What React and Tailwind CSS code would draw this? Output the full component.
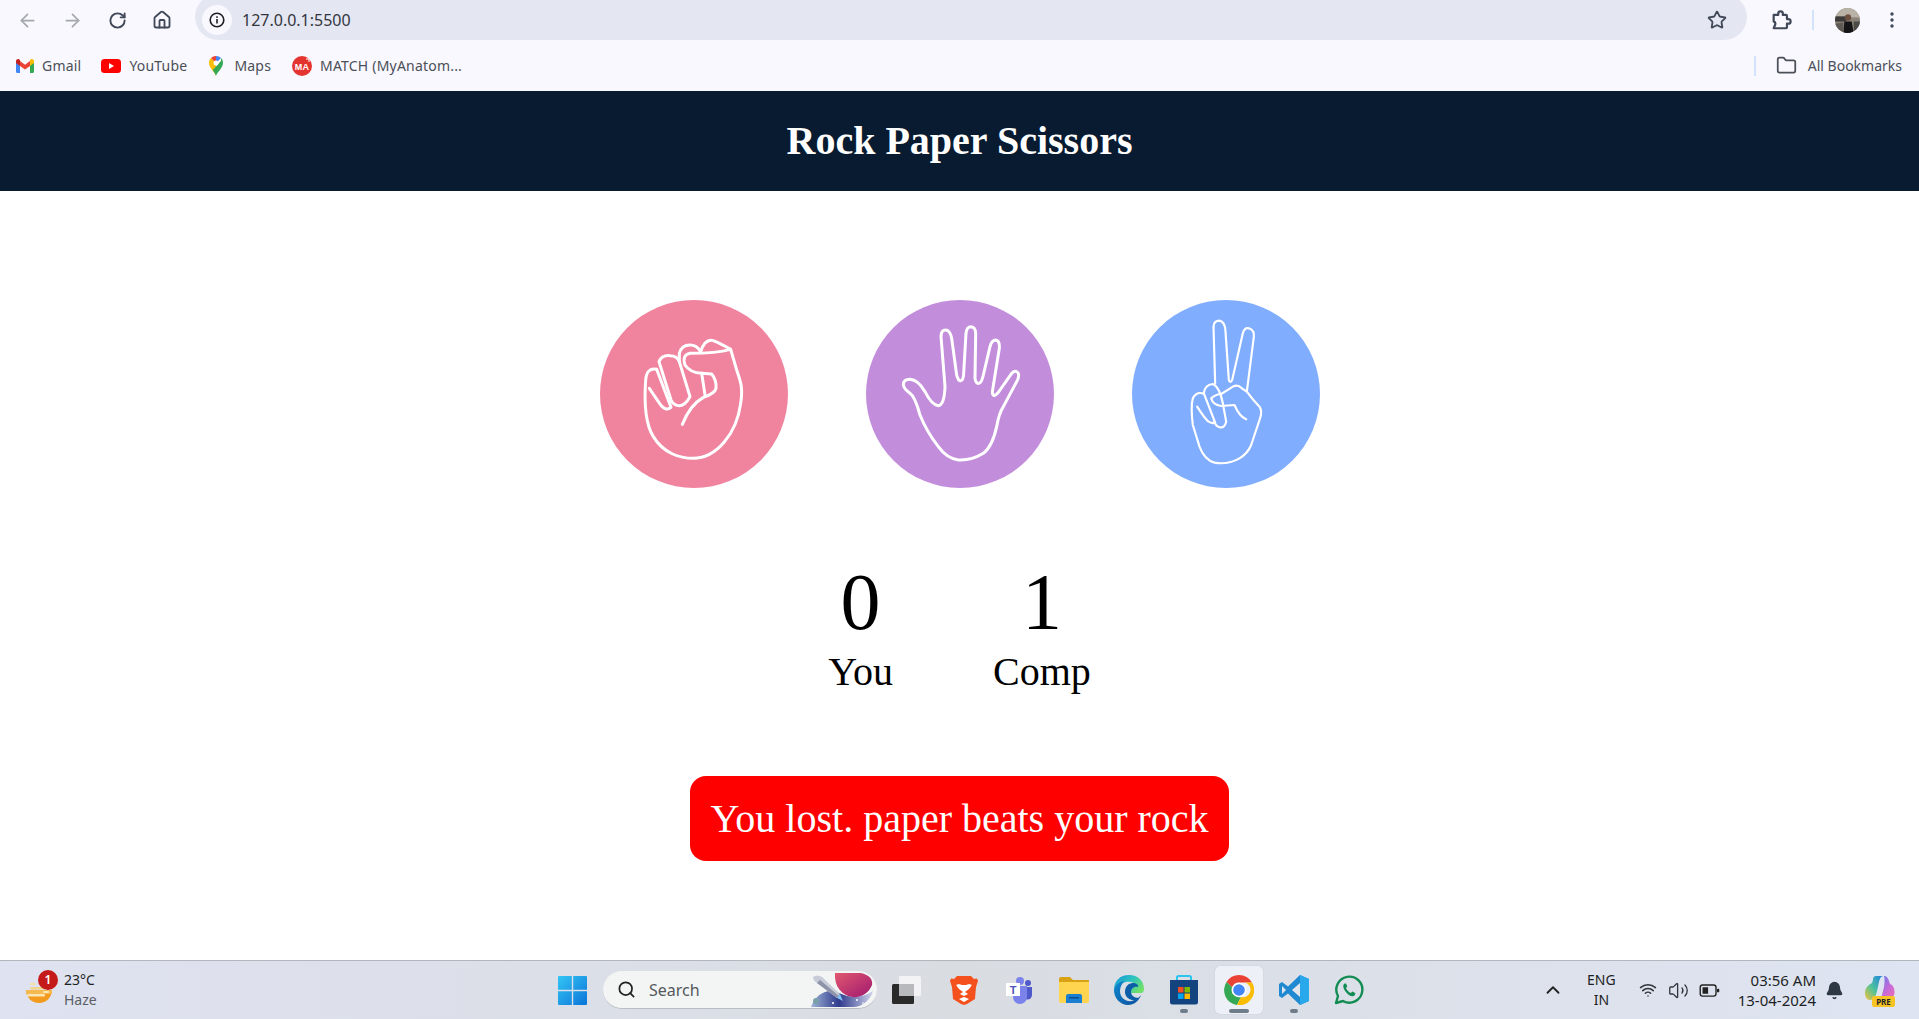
import React from "react";
import { ArrowLeft, ArrowRight, RotateCw, House, Star, Folder, Search, ChevronUp, Wifi, Volume2, Bell } from "lucide-react";

const Fist = () => (
  <svg viewBox="30 30 564 564" className="w-full h-full" fill="none" stroke="#fff" strokeWidth="9" strokeLinecap="round" strokeLinejoin="round">
    <path d="M200 238Q170 232 167 270C162 340 165 400 190 440C220 490 270 505 310 505C380 505 440 430 452 340C460 290 450 270 440 240L422 178" />
    <path d="M178 295L212 345Q228 365 243 352L200 238" />
    <path d="M207 215Q215 195 240 197Q262 197 268 215L300 320Q280 355 258 345Q248 342 243 330L207 215" />
    <path d="M268 215V190Q275 165 300 165Q320 165 332 185Q345 145 370 152Q390 160 422 178Q380 190 300 190Q275 195 285 225Q300 248 335 250L365 252Q380 270 378 295Q375 310 340 322Q300 345 277 403" />
    <path d="M335 250L345 315" />
  </svg>
);

const Paper = () => (
  <svg viewBox="33 30 564 564" className="w-full h-full" fill="none" stroke="#fff" strokeWidth="9" strokeLinecap="round" strokeLinejoin="round">
    <path d="M145 285Q145 268 165 268Q190 270 210 305Q230 345 250 347Q268 345 270 290L258 140Q258 120 272 120Q285 120 290 145L305 255Q310 275 318 272Q325 270 326 250L333 130Q335 110 348 110Q362 112 362 130L360 265Q362 282 372 280Q380 278 385 255L405 170Q410 150 422 150Q435 152 433 175L412 305Q412 318 420 316Q428 312 435 300L470 250Q482 238 490 250Q493 262 485 275L445 350Q432 370 425 410Q412 470 385 490Q350 512 310 510Q275 505 250 470Q215 425 195 375Q180 320 165 310Q148 298 145 285Z" />
  </svg>
);

const Scissors = () => (
  <svg viewBox="24 30 561 564" className="w-full h-full" fill="none" stroke="#fff" strokeWidth="6.500" strokeLinecap="round" strokeLinejoin="round">
    <path d="M272 280L267 110Q268 92 285 92Q302 95 303 125L313 270Q316 282 323 270L355 130Q360 112 373 115Q390 120 388 140L367 305Q385 330 405 350Q415 365 405 390L380 465Q370 490 345 505Q310 525 270 518Q240 510 225 470L205 405Q198 350 205 325Q215 305 235 310" />
    <path d="M218 350Q240 385 252 395Q265 402 272 398L238 310Q240 285 265 282Q285 290 295 340L305 395Q300 415 285 412Q272 408 268 390" />
    <path d="M260 325Q275 312 290 312Q310 300 325 290Q340 282 352 295L367 305M260 325Q265 345 290 348L330 345Q345 380 365 388" />
  </svg>
);

const Gmail = () => (
  <svg viewBox="0 0 18 14" className="w-[18px] h-[14px]">
    <path d="M0 2v10.500A1.500 1.500 0 0 0 1.500 14H4V6z" fill="#4285f4" />
    <path d="M18 2v10.500a1.500 1.500 0 0 1-1.500 1.500H14V6z" fill="#34a853" />
    <path d="M4 7V2l5 3.800L14 2v5L9 10.600z" fill="#ea4335" />
    <path d="M0 2.200C0 .5 2 -.6 3.300.4L4 1v6L0 4z" fill="#c5221f" />
    <path d="M18 2.200C18 .5 16 -.6 14.700.4L14 1v6l4-3z" fill="#fbbc04" />
  </svg>
);

const Youtube = () => (
  <svg viewBox="0 0 20 14" className="w-5 h-[14px]">
    <rect width="20" height="14" rx="3.500" fill="#f00" />
    <path d="M8 4l5 3-5 3z" fill="#fff" />
  </svg>
);

const Maps = () => (
  <svg viewBox="0 0 14 20" className="w-[14px] h-5">
    <path d="M7 20C6 16 0 12 0 7c0-2 .8-3.700 2-5l5 5z" fill="#fbbc04" />
    <path d="M2 2A7 7 0 0 1 7 0v7z" fill="#ea4335" />
    <path d="M7 0a7 7 0 0 1 5 2L7 7z" fill="#4285f4" />
    <path d="M12 2c1.300 1.300 2 3 2 5 0 5-6 9-7 13-.5-2-2-4-3.300-6L12 5z" fill="#34a853" />
    <circle cx="7" cy="7" r="2.500" fill="#fff" />
  </svg>
);

const MatchLogo = () => (
  <svg viewBox="0 0 20 20" className="w-5 h-5">
    <circle cx="10" cy="10" r="10" fill="#e3342f" />
    <text x="10" y="13.500" textAnchor="middle" fontSize="9" fontWeight="700" fill="#fff" fontFamily="Liberation Sans, sans-serif">MA</text>
    <path d="M14 3h3v3" stroke="#fff" strokeWidth="1" fill="none" />
  </svg>
);

const Bookmark = ({ icon, label, className }) => (
  <div className={`flex items-center gap-[8px] ${className}`}>
    {icon}
    <span>{label}</span>
  </div>
);

const PuzzleIcon = () => (
  <svg viewBox="0 0 24 24" className="w-[22px] h-[22px]" fill="none" stroke="#414858" strokeWidth="2.400" strokeLinejoin="round">
    <path d="M4 6.500h5V5a2.500 2.500 0 0 1 5 0v1.500h3.500a1 1 0 0 1 1 1V11H20a2.500 2.500 0 0 1 0 5h-1.500v4a1 1 0 0 1-1 1H4l1.500-3.500c.8-2-.3-3.500-1.500-4z" />
  </svg>
);

const Avatar = () => (
  <svg viewBox="0 0 24 24" className="w-[25px] h-[25px] rounded-full">
    <rect width="24" height="24" fill="#8a8378" />
    <rect width="24" height="9" fill="#b9b2a6" />
    <rect y="8" width="11" height="5" fill="#3d3a3a" />
    <path d="M8 24l1-11h7l2 11z" fill="#141416" />
    <circle cx="12.500" cy="9" r="3" fill="#6d4f3f" />
    <path d="M18 24V13h6v11z" fill="#4c4a46" />
    <path d="M0 24V15l8-1v10z" fill="#5f5a55" />
  </svg>
);

const ChromeTop = () => (
  <div className="h-[91px] shrink-0 bg-[#f9f8fe] flex flex-col font-['Noto_Sans',sans-serif] overflow-hidden">
    <div className="h-[40px] flex items-start shrink-0">
      <div className="flex items-center h-[40px] pl-[17px] w-[190px] shrink-0">
        <ArrowLeft size={21} className="text-[#a4a7ad]" />
        <ArrowRight size={21} className="text-[#a4a7ad] ml-[24px]" />
        <RotateCw size={19} strokeWidth={2.400} className="text-[#414858] ml-[25px]" />
        <House size={20} strokeWidth={2.200} className="text-[#414858] ml-[25px]" />
      </div>
      <div className="ml-[5px] -mt-[6px] h-[46px] w-[1552px] shrink-0 bg-[#e4e7f2] rounded-full flex items-center pl-[7px] pr-[20px]">
        <div className="mt-[6px] w-[30px] h-[30px] bg-[#f9f8fe] rounded-full flex items-center justify-center">
          <svg viewBox="0 0 16 16" className="w-4 h-4">
            <circle cx="8" cy="8" r="6.800" fill="none" stroke="#1f2024" strokeWidth="1.600" />
            <rect x="7.200" y="7" width="1.600" height="4.500" fill="#1f2024" />
            <rect x="7.200" y="4.300" width="1.600" height="1.600" fill="#1f2024" />
          </svg>
        </div>
        <span className="mt-[5px] ml-[10px] text-[16px] text-[#33363d]">127.0.0.1:5500</span>
        <Star size={20} strokeWidth={2.200} className="mt-[6px] ml-auto text-[#414858]" />
      </div>
      <div className="flex items-center h-[40px] flex-1 min-w-0 pl-[23px]">
        <PuzzleIcon />
        <div className="ml-[20px] w-[2px] h-[20px] bg-[#d3e3fd]" />
        <div className="ml-[21px]"><Avatar /></div>
        <svg viewBox="0 0 4 16" className="ml-[30px] w-1 h-4 shrink-0" fill="#414858">
          <circle cx="2" cy="2" r="1.700" /><circle cx="2" cy="8" r="1.700" /><circle cx="2" cy="14" r="1.700" />
        </svg>
      </div>
    </div>
    <div className="flex-1 flex items-center text-[14px] tracking-[0.2px] text-[#4b4f58]">
      <Bookmark className="ml-[16px]" icon={<Gmail />} label="Gmail" />
      <Bookmark className="ml-[20px]" icon={<Youtube />} label="YouTube" />
      <Bookmark className="ml-[22px] gap-[11px]" icon={<Maps />} label="Maps" />
      <Bookmark className="ml-[21px]" icon={<MatchLogo />} label="MATCH (MyAnatom..." />
      <div className="ml-auto flex items-center tracking-normal">
        <div className="w-[2px] h-[20px] bg-[#d3e3fd]" />
        <Folder size={21} strokeWidth={2} className="ml-[20px] text-[#4b4f58]" />
        <span className="ml-[11px] mr-[17px]">All Bookmarks</span>
      </div>
    </div>
  </div>
);

const Choice = ({ color, children }) => (
  <div className={`w-[188px] h-[188px] rounded-full ${color}`}>{children}</div>
);

const Game = () => (
  <main className="flex-1 min-h-0 flex flex-col items-center font-['Liberation_Serif',serif] text-black">
    <div className="mt-[109px] flex gap-[78px]">
      <Choice color="bg-[#f0849f]"><Fist /></Choice>
      <Choice color="bg-[#c28ddb]"><Paper /></Choice>
      <Choice color="bg-[#81adff]"><Scissors /></Choice>
    </div>
    <div className="mt-[68px] flex gap-[100px] items-start">
      <div className="flex flex-col items-center">
        <span className="text-[80px] leading-[92px]">0</span>
        <span className="mt-[1px] text-[40px] leading-[46px]">You</span>
      </div>
      <div className="flex flex-col items-center">
        <span className="text-[80px] leading-[92px]">1</span>
        <span className="mt-[1px] text-[40px] leading-[46px]">Comp</span>
      </div>
    </div>
    <div className="mt-[81px] bg-[#ff0000] text-white text-[40px] leading-[45px] p-[20px] rounded-[16px]">
      You lost. paper beats your rock
    </div>
  </main>
);

const Weather = () => (
  <div className="relative w-[30px] h-[30px]">
    <svg viewBox="0 0 30 30" className="w-[30px] h-[30px]">
      <path d="M2 15h26a13 13 0 0 1-26 0z" fill="#f29b1f" />
      <path d="M2 15h26v4H3z" fill="#f5b94f" />
      <rect x="6" y="8" width="6" height="2" rx="1" fill="#f3dfa4" />
      <rect x="6" y="12" width="16" height="2.500" rx="1.200" fill="#f0d48a" />
      <rect x="3" y="19" width="18" height="2.500" rx="1.200" fill="#fbe7b5" />
      <rect x="19" y="16" width="6" height="2" rx="1" fill="#fbe7b5" />
    </svg>
    <div className="absolute -top-[5px] left-[14px] w-5 h-5 rounded-full bg-[#c41a1a] text-white text-[12px] font-semibold flex items-center justify-center">1</div>
  </div>
);

const SearchArt = () => (
  <svg viewBox="0 0 62 34" className="w-[62px] h-[34px]">
    <defs>
      <linearGradient id="navy" x1="0" y1="0" x2="1" y2="0"><stop offset="0" stopColor="#9fb3d6" /><stop offset=".45" stopColor="#2f3a8c" /><stop offset="1" stopColor="#cfd3ea" /></linearGradient>
      <linearGradient id="planet" x1="0" y1="0" x2="1" y2="1"><stop offset="0" stopColor="#e0586f" /><stop offset="1" stopColor="#a0186f" /></linearGradient>
    </defs>
    <path d="M0 34C4 22 16 14 28 20c10 5 22 6 34-2-2 8-10 16-20 16z" fill="url(#navy)" />
    <path d="M24 0h26c8 2 12 6 11 12-3 8-11 13-20 12-10-2-18-10-17-24z" fill="url(#planet)" />
    <path d="M2 4c3-2 6-2 9 0l18 17-3 4L6 10C3 8 2 6 2 4z" fill="#c8ccd8" />
    <path d="M6 10l20 15 2-2L9 7z" fill="#8d93a8" />
    <path d="M26 25l6 3-3-7z" fill="#7fc0f5" />
    <circle cx="5" cy="28" r="3" fill="#79a0a8" />
    <circle cx="22" cy="30" r="1" fill="#fff" /><circle cx="46" cy="27" r="1" fill="#fff" /><circle cx="52" cy="30" r=".8" fill="#fff" />
  </svg>
);

const WinLogo = () => (
  <svg viewBox="0 0 29 29" className="w-[29px] h-[29px]">
    <defs>
      <linearGradient id="w1" x1="0" y1="0" x2="1" y2="1"><stop offset="0" stopColor="#33c6f5" /><stop offset="1" stopColor="#0b74d8" /></linearGradient>
    </defs>
    <path d="M1 0h12.800v13.800H0V1a1 1 0 0 1 1-1zM15.200 0H28a1 1 0 0 1 1 1v12.800H15.200zM0 15.200h13.800V29H1a1 1 0 0 1-1-1zM15.200 15.200H29V28a1 1 0 0 1-1 1H15.200z" fill="url(#w1)" />
  </svg>
);

const TaskView = () => (
  <svg viewBox="0 0 30 30" className="w-[30px] h-[30px]">
    <rect x="1" y="9" width="22" height="20" rx="1.500" fill="#2a2a2b" />
    <rect x="8" y="1" width="22" height="20" rx="1.500" fill="#f7f7f8" fillOpacity=".85" />
    <rect x="8" y="9" width="15" height="12" fill="#b7b9bc" />
  </svg>
);

const Brave = () => (
  <svg viewBox="0 0 28 30" className="w-[28px] h-[30px]">
    <path d="M7 1h14l3 3 3-.5L28 6l-2 6-1 12-8 5-3 1-3-1-8-5-1-12-2-6 1-2.500L4 4z" fill="#f4511e" />
    <path d="M14 21l-4-2 3-2-4-3-3-4 3-1 3 1h4l3-1 3 1-3 4-4 3 3 2z" fill="#fff" />
    <path d="M14 27l-5-3 5-2 5 2z" fill="#fff" />
  </svg>
);

const Teams = () => (
  <svg viewBox="0 0 28 28" className="w-[28px] h-[28px]">
    <circle cx="23" cy="7" r="3" fill="#5059c9" />
    <path d="M18 11h9v8a4.500 4.500 0 0 1-9 0z" fill="#5059c9" />
    <circle cx="15" cy="5" r="4" fill="#7b83eb" />
    <path d="M8 10h14v11a7 7 0 0 1-14 0z" fill="#7b83eb" />
    <rect x="1" y="7" width="14" height="13" fill="#fff" />
    <text x="8" y="17.500" textAnchor="middle" fontSize="11" fontWeight="700" fill="#4b53bc" fontFamily="Liberation Sans, sans-serif">T</text>
  </svg>
);

const Explorer = () => (
  <svg viewBox="0 0 30 26" className="w-[30px] h-[26px]">
    <path d="M0 2a2 2 0 0 1 2-2h9l3 3h16v5H0z" fill="#d9a215" />
    <path d="M0 5h30v19a2 2 0 0 1-2 2H2a2 2 0 0 1-2-2z" fill="#ffd54f" />
    <path d="M7 26v-7a2 2 0 0 1 2-2h12a2 2 0 0 1 2 2v7z" fill="#1a7fd0" />
    <rect x="10" y="20" width="10" height="1.500" fill="#0b4f8f" />
  </svg>
);

const Edge = () => (
  <svg viewBox="0 0 30 30" className="w-[30px] h-[30px]">
    <defs>
      <linearGradient id="e1" x1="0" y1="0" x2="1" y2=".6"><stop offset="0" stopColor="#1592d8" /><stop offset=".55" stopColor="#2cc3c0" /><stop offset="1" stopColor="#6fe06a" /></linearGradient>
      <linearGradient id="e2" x1="0" y1="0" x2="1" y2="1"><stop offset="0" stopColor="#0f8ad0" /><stop offset="1" stopColor="#0d4f9e" /></linearGradient>
    </defs>
    <path d="M15 0C24 0 30 6 30 14c0 2-1 4-3 4H17c-1-5 3-8 6-7-2-3-6-5-11-4C6 8 2 12 0 15 0 6 6 0 15 0z" fill="url(#e1)" />
    <path d="M0 15c1-5 6-9 11-9-3 2-5 6-5 10 0 7 6 11 12 10 4-1 7-3 9-6-2 6-7 10-13 10C6 30 0 23 0 15z" fill="url(#e2)" />
    <path d="M11 17c0-5 3-9 8-9 3 0 6 2 5 4-3-1-7 1-7 5 0 3 3 6 8 6-2 2-5 3-7 2-4-1-7-4-7-8z" fill="#0d5ea8" />
  </svg>
);

const Store = () => (
  <svg viewBox="0 0 30 30" className="w-[30px] h-[30px]">
    <path d="M8 5V2.500A1.500 1.500 0 0 1 9.500 1h11A1.500 1.500 0 0 1 22 2.500V5" fill="none" stroke="#29c5f0" strokeWidth="2" />
    <path d="M1 5h28v22a2.500 2.500 0 0 1-2.500 2.500h-23A2.500 2.500 0 0 1 1 27z" fill="#14447f" />
    <rect x="9" y="12" width="5.500" height="5.500" fill="#f25022" />
    <rect x="15.500" y="12" width="5.500" height="5.500" fill="#7fba00" />
    <rect x="9" y="18.500" width="5.500" height="5.500" fill="#00a4ef" />
    <rect x="15.500" y="18.500" width="5.500" height="5.500" fill="#ffb900" />
  </svg>
);

const ChromeLogo = () => (
  <svg viewBox="0 0 30 30" className="w-[30px] h-[30px]">
    <path d="M15 0a15 15 0 0 1 13 7.500H15a7.500 7.500 0 0 0-7 4.800L2.500 7A15 15 0 0 1 15 0z" fill="#ea4335" />
    <path d="M2.500 7L8 12.300A7.500 7.500 0 0 0 17 22l-4 8A15 15 0 0 1 2.500 7z" fill="#34a853" />
    <path d="M28 7.500A15 15 0 0 1 13 30l4-8a7.500 7.500 0 0 0 4-14.500z" fill="#fbbc04" />
    <circle cx="15" cy="15" r="7.200" fill="#fff" />
    <circle cx="15" cy="15" r="5.800" fill="#4285f4" />
  </svg>
);

const VSCode = () => (
  <svg viewBox="0 0 30 30" className="w-[30px] h-[30px]">
    <path d="M21 0l9 4v22l-9 4-12-11.500L3 23l-3-2v-12l3-2 6 4.500z" fill="#1f8ad2" />
    <path d="M21 0l9 4v22l-9 4z" fill="#29a9ec" />
    <path d="M21 8l-8 7 8 7z" fill="#e2e5ec" />
    <path d="M3 11l4 4-4 4z" fill="#e2e5ec" />
  </svg>
);

const WhatsApp = () => (
  <svg viewBox="0 0 30 30" className="w-[30px] h-[30px]" fill="none">
    <path d="M2 28l2-7A13 13 0 1 1 9 26z" stroke="#128c52" strokeWidth="2.400" strokeLinejoin="round" />
    <path d="M10.500 8.500c-2 1.500-1.500 4.500 1 8s6 5.500 8 4.500c1.500-.7 2-2 1.800-3l-3-1.500-1.500 1.600c-2-.8-3.800-2.600-4.800-5l1.300-1.500-1.300-3z" fill="#128c52" />
  </svg>
);

const Dot = ({ active }) => (
  <div className={`absolute bottom-[1px] left-1/2 -translate-x-1/2 h-[4px] rounded-full bg-[#6f7c8a] ${active ? "w-[20px]" : "w-[8px]"}`} />
);

const TBIcon = ({ children, active, dot }) => (
  <div className={`relative w-[48px] h-[48px] flex items-center justify-center rounded-[5px] ${active ? "bg-[#eef0f8] shadow-[0_0_1px_rgba(0,0,0,0.2)]" : ""}`}>
    {children}
    {dot && <Dot active={active} />}
  </div>
);

const Copilot = () => (
  <div className="relative w-[30px] h-[30px]">
    <svg viewBox="0 0 30 30" className="w-[30px] h-[30px]">
      <defs>
        <linearGradient id="c1" x1="0" y1="1" x2="1" y2="0"><stop offset="0" stopColor="#f5c33b" /><stop offset=".45" stopColor="#4cc29a" /><stop offset="1" stopColor="#1f7fe6" /></linearGradient>
        <linearGradient id="c2" x1="0" y1="0" x2="1" y2="1"><stop offset="0" stopColor="#4a7ff0" /><stop offset=".6" stopColor="#c86ad8" /><stop offset="1" stopColor="#f06fb0" /></linearGradient>
      </defs>
      <path d="M19 1c3 0 4 2 5 5l1 3c3 1 4.500 4 4.500 8 0 5-3 8-8 8H11c4 0 5-2 6-5l2-8c.5-3 1-8 0-11z" fill="url(#c2)" />
      <path d="M11 1h8c-3 0-4 2-5 6l-2 9c-1 5-3 9-7 9-3 0-5-3-5-7 0-6 4-8 7-10l1-3c0-3 1-4 3-4z" fill="url(#c1)" />
    </svg>
    <div className="absolute -bottom-[2px] left-[7px] w-[23px] h-[11px] bg-[#f7c325] rounded-[2px] text-[8px] leading-[11px] font-bold text-[#222] text-center">PRE</div>
  </div>
);

const Taskbar = () => (
  <div className="h-[59px] shrink-0 border-t border-[#b3b6bc] bg-gradient-to-r from-[#dfe2f0] via-[#d9dde2] to-[#dfe4f2] grid grid-cols-[1fr_auto_1fr] items-center font-['Noto_Sans',sans-serif] text-[#1d1f24]">
    <div className="flex items-center pl-[24px]">
      <Weather />
      <div className="ml-[10px] flex flex-col text-[14px] leading-[20px]">
        <span>23°C</span>
        <span className="text-[#5a5e66]">Haze</span>
      </div>
    </div>
    <div className="flex items-center pl-[2px]">
      <TBIcon><WinLogo /></TBIcon>
      <div className="ml-[7px] w-[274px] h-[38px] rounded-full bg-[#f3f5f5] border-b border-[#b9bcc0] flex items-center pl-[14px] overflow-hidden">
        <Search size={19} strokeWidth={2.200} className="text-[#222]" />
        <span className="ml-[13px] text-[16px] text-[#55585c]">Search</span>
        <div className="ml-auto mr-[4px]"><SearchArt /></div>
      </div>
      <div className="ml-[5px]"><TBIcon><TaskView /></TBIcon></div>
      <div className="ml-[10px]"><TBIcon><Brave /></TBIcon></div>
      <div className="ml-[7px]"><TBIcon><Teams /></TBIcon></div>
      <div className="ml-[7px]"><TBIcon><Explorer /></TBIcon></div>
      <div className="ml-[7px]"><TBIcon><Edge /></TBIcon></div>
      <div className="ml-[7px]"><TBIcon dot><Store /></TBIcon></div>
      <div className="ml-[7px]"><TBIcon active dot><ChromeLogo /></TBIcon></div>
      <div className="ml-[7px]"><TBIcon dot><VSCode /></TBIcon></div>
      <div className="ml-[7px]"><TBIcon><WhatsApp /></TBIcon></div>
    </div>
    <div className="flex items-center justify-end pr-[24px]">
      <ChevronUp size={22} strokeWidth={2} className="text-[#222]" />
      <div className="ml-[23px] flex flex-col items-center text-[14px] leading-[20px]">
        <span>ENG</span>
        <span>IN</span>
      </div>
      <Wifi size={18} strokeWidth={2} className="ml-[23px] text-[#33363c]" />
      <Volume2 size={21} strokeWidth={1.500} className="ml-[11px] text-[#33363c]" />
      <svg viewBox="0 0 22 14" className="ml-[10px] w-[21px] h-[13px]">
        <rect x="1" y="1" width="17" height="12" rx="2.500" fill="none" stroke="#222" strokeWidth="1.500" />
        <rect x="3.500" y="3.500" width="6" height="7" fill="#222" />
        <rect x="19" y="5" width="2.500" height="4" rx="1" fill="#222" />
      </svg>
      <div className="ml-[18px] -mt-[1px] flex flex-col items-end text-[15px] leading-[20px]">
        <span>03:56 AM</span>
        <span>13-04-2024</span>
      </div>
      <Bell size={19} fill="#2e3844" strokeWidth={1.800} className="ml-[9px] text-[#2e3844]" />
      <div className="ml-[21px]"><Copilot /></div>
    </div>
  </div>
);

export default function App() {
  return (
    <div className="h-[1019px] w-full overflow-hidden bg-white flex flex-col">
      <ChromeTop />
      <header className="h-[100px] shrink-0 bg-[#081b31] flex items-center justify-center">
        <h1 className="font-['Liberation_Serif',serif] font-bold text-white text-[40px]">Rock Paper Scissors</h1>
      </header>
      <Game />
      <Taskbar />
    </div>
  );
}
